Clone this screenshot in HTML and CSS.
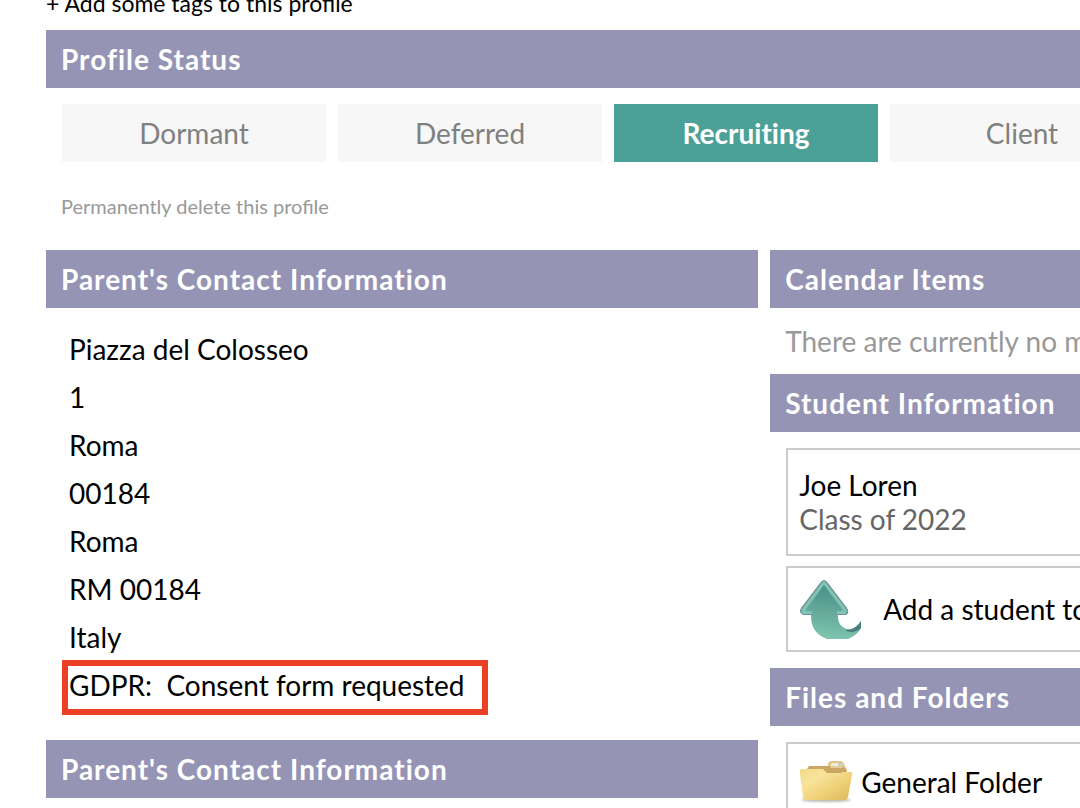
FILE: index.html
```html
<!DOCTYPE html>
<html lang="en">
<head>
    <meta charset="UTF-8">
    <meta name="viewport" content="width=device-width, initial-scale=1.0">
    <title>Profile</title>
    <link rel="stylesheet" href="styles.css">
</head>
<body>
    <main class="profile">
        <a href="#" class="add-tags">+ Add some tags to this profile</a>

        <section>
            <h2 class="bar">Profile Status</h2>
            <div class="status">
                <button type="button">Dormant</button>
                <button type="button">Deferred</button>
                <button type="button" class="active">Recruiting</button>
                <button type="button">Client</button>
            </div>
            <a href="#" class="delete">Permanently delete this profile</a>
        </section>

        <div class="columns">
            <div class="col">
                <h2 class="bar">Parent's Contact Information</h2>
                <ul class="address">
                    <li>Piazza del Colosseo</li>
                    <li>1</li>
                    <li>Roma</li>
                    <li>00184</li>
                    <li>Roma</li>
                    <li>RM 00184</li>
                    <li>Italy</li>
                    <li><span class="gdpr">GDPR:&nbsp; Consent form requested</span></li>
                </ul>
                <h2 class="bar">Parent's Contact Information</h2>
            </div>

            <div class="col">
                <h2 class="bar">Calendar Items</h2>
                <p class="empty">There are currently no meetings</p>

                <h2 class="bar">Student Information</h2>
                <div class="cards">
                    <a href="#" class="card student">
                        <span>Joe Loren</span>
                        <span class="year">Class of 2022</span>
                    </a>
                    <a href="#" class="card add-student">
                        <svg width="64" height="62" viewBox="0 0 64 62" aria-hidden="true">
                            <defs>
                                <linearGradient id="arrow" gradientUnits="userSpaceOnUse" x1="30" y1="6" x2="24" y2="62">
                                    <stop offset="0" stop-color="#468f86"/>
                                    <stop offset="0.45" stop-color="#62a698"/>
                                    <stop offset="0.7" stop-color="#6fb5a3"/>
                                    <stop offset="1" stop-color="#7fc8b0"/>
                                </linearGradient>
                            </defs>
                            <path d="M12 33V38C12 49 17 57 28 61H49C56 58 60 54 62 50V43C58 49 53 52 48 51C42 49 38 45 39 34Z" fill="url(#arrow)"/>
                            <path d="M47 52C54 52 59 48 62 43V50C58 54 52 55 47 53Z" fill="#47807e"/>
                            <path d="M25 2Q27 2 29 5L48 30Q51 35 47 37H4Q-1 35 2 30L21 5Q23 2 25 2Z" fill="#6d919b"/>
                            <path d="M25 3Q26 3 28 6L47 31Q49 35 46 36H4Q1 34 3 31L22 6Q24 3 25 3Z" fill="#82c4b3"/>
                            <path d="M25 7L44 32Q44 33 42 33H38V38H13V33H8Q6 33 7 31Z" fill="url(#arrow)"/>
                        </svg>
                        <span>Add a student to this profile</span>
                    </a>
                </div>

                <h2 class="bar">Files and Folders</h2>
                <div class="cards">
                    <a href="#" class="card folder">
                        <svg width="54" height="44" viewBox="0 0 54 44" aria-hidden="true">
                            <defs>
                                <linearGradient id="front" x1="0" y1="0" x2="1" y2="1">
                                    <stop offset="0" stop-color="#f3da8c"/>
                                    <stop offset="0.3" stop-color="#f8e39a"/>
                                    <stop offset="0.6" stop-color="#efd27a"/>
                                    <stop offset="1" stop-color="#dcb658"/>
                                </linearGradient>
                                <filter id="soft" x="-10%" y="-50%" width="120%" height="200%">
                                    <feGaussianBlur stdDeviation="1"/>
                                </filter>
                            </defs>
                            <ellipse cx="27" cy="40" rx="25" ry="2" fill="#b9b7b0" filter="url(#soft)"/>
                            <path d="M28 9L29 4Q30 1 32 1H42Q44 1 45 4L48 10V20H28Z" fill="#e0c588"/>
                            <path d="M31 6L33 3H42L43 6Z" fill="#f3ead0"/>
                            <rect x="39" y="3" width="3" height="4" fill="#b5d3dc"/>
                            <path d="M8 9L10 6H43L47 9L48 20H7Z" fill="#cba765"/>
                            <path d="M32 6H43L44 8H31Z" fill="#e5cf98"/>
                            <path d="M1 10Q1 9 3 9H24L28 13H42L44 12H52Q54 12 53 15L49 37Q48 40 46 40H7Q4 40 4 37L1 14Z" fill="url(#front)"/>
                        </svg>
                        <span>General Folder</span>
                    </a>
                </div>
            </div>
        </div>
    </main>
</body>
</html>
```

FILE: styles.css
```css
* {
    box-sizing: border-box;
}
html {
    overflow: hidden;
}
body {
    margin: 0;
    background: #fff;
    color: #000;
    font-family: Lato, sans-serif;
    font-size: 28px;
    line-height: 34px;
}
a {
    color: inherit;
    text-decoration: none;
}
/* the page is wider than the window and runs off to the right */
.profile {
    width: 133%;
    margin: -12px 0 0 46px;
}
.add-tags {
    display: block;
    height: 42px;
    font-size: 23px;
    line-height: 30px;
}
.bar {
    margin: 0;
    padding: 12px 15px;
    background: #9594b5;
    color: #fff;
    font-size: 28px;
    font-weight: bold;
    letter-spacing: 1px;
}
.status {
    display: flex;
    gap: 12px;
    padding: 16px 16px 0;
}
.status button {
    flex: 0 0 264px;
    padding: 12px;
    border: none;
    background: #f7f7f7;
    color: #808080;
    font: inherit;
    font-variant-ligatures: none;
    cursor: pointer;
}
.status .active {
    background: #4ba198;
    color: #fff;
    font-weight: bold;
}
.delete {
    display: block;
    padding: 27px 15px;
    color: #999;
    font-size: 20px;
}
.columns {
    display: grid;
    grid-template-columns: 1fr 1fr;
    gap: 12px;
}
.address {
    margin: 0;
    padding: 17px 23px 31px;
    list-style: none;
    line-height: 48px;
}
.gdpr {
    position: relative;
}
/* red frame around the consent line */
.gdpr::after {
    content: "";
    position: absolute;
    inset: -8px -23px -13px -7px;
    border: 6px solid #ec4026;
}
.empty {
    margin: 0;
    padding: 16px 15px;
    color: #999;
}
.cards {
    display: grid;
    gap: 10px;
    padding: 16px;
}
.card {
    display: flex;
    align-items: center;
    min-height: 86px;
    padding: 10px 11px;
    border: 2px solid #ccc;
}
.student {
    flex-direction: column;
    align-items: flex-start;
    padding: 18px 11px;
}
.year {
    color: #666;
}
.add-student {
    gap: 20px;
}
.folder {
    gap: 8px;
    padding-bottom: 16px;
}
```
